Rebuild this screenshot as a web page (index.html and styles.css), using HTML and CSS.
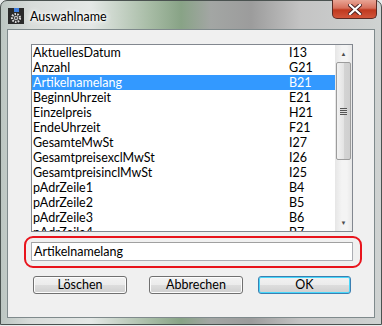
FILE: index.html
```html
<!DOCTYPE html>
<html lang="de">
<head>
    <meta charset="UTF-8">
    <title>Auswahlname</title>
    <link rel="stylesheet" href="styles.css">
</head>
<body>
    <div class="window">
        <div class="titlebar">
            <svg class="app-icon" width="16" height="16" viewBox="0 0 16 16">
                <rect x="0" y="0" width="16" height="16" fill="#2a2a2a"/>
                <rect x="6" y="0" width="5" height="4" fill="#3d7fe0"/>
                <circle cx="8" cy="10" r="4" fill="none" stroke="#d8d8d8" stroke-width="2.2" stroke-dasharray="1.6 1.2"/>
                <circle cx="8" cy="10" r="2.2" fill="#bdbdbd"/>
                <circle cx="8" cy="10" r="0.9" fill="#2a2a2a"/>
            </svg>
            <span class="title">Auswahlname</span>
            <div class="close-btn">
                <svg width="14" height="11" viewBox="0 0 14 11">
                    <path d="M2 1 L12 10 M12 1 L2 10" stroke="#4a2020" stroke-width="4" stroke-linecap="square"/>
                    <path d="M2 1 L12 10 M12 1 L2 10" stroke="#ffffff" stroke-width="2.2" stroke-linecap="square"/>
                </svg>
            </div>
        </div>

        <div class="client">
            <div class="listbox">
                <div class="rows">
                    <div class="row"><span>AktuellesDatum</span><span>I13</span></div>
                    <div class="row"><span>Anzahl</span><span>G21</span></div>
                    <div class="row selected"><span>Artikelnamelang</span><span>B21</span></div>
                    <div class="row"><span>BeginnUhrzeit</span><span>E21</span></div>
                    <div class="row"><span>Einzelpreis</span><span>H21</span></div>
                    <div class="row"><span>EndeUhrzeit</span><span>F21</span></div>
                    <div class="row"><span>GesamteMwSt</span><span>I27</span></div>
                    <div class="row"><span>GesamtpreisexclMwSt</span><span>I26</span></div>
                    <div class="row"><span>GesamtpreisinclMwSt</span><span>I25</span></div>
                    <div class="row"><span>pAdrZeile1</span><span>B4</span></div>
                    <div class="row"><span>pAdrZeile2</span><span>B5</span></div>
                    <div class="row"><span>pAdrZeile3</span><span>B6</span></div>
                    <div class="row"><span>pAdrZeile4</span><span>B7</span></div>
                </div>
                <div class="scrollbar">
                    <div class="arrow">&#9650;</div>
                    <div class="track">
                        <div class="thumb"><span class="grip"></span></div>
                    </div>
                    <div class="arrow">&#9660;</div>
                </div>
            </div>

            <div class="highlight">
                <div class="textfield">Artikelnamelang</div>
            </div>

            <div class="buttons">
                <div class="btn">Löschen</div>
                <div class="btn">Abbrechen</div>
                <div class="btn default">OK</div>
            </div>
        </div>
    </div>
</body>
</html>
```

FILE: styles.css
```css
body {
    margin: 0;
    background: #e8ecec;
    font-family: Lato, "Noto Sans", sans-serif;
    font-size: 12.5px;
    color: #000;
}
.window {
    width: 382px;
    height: 325px;
    box-sizing: border-box;
    border: 1px solid #4a5250;
    border-radius: 7px 7px 0 0;
    background: linear-gradient(90deg, #bcc6c2 0px, #d8dcda 30px, #e4e8e6 90px, #a6bba4 150px, #88a386 180px, #a3a6a4 210px, #9c9c9c 250px, #c4c4c4 300px, #cfd3d2 382px);
    padding: 0 6px 6px 6px;
    display: flex;
    flex-direction: column;
}
.titlebar {
    height: 28px;
    display: flex;
    align-items: center;
    position: relative;
}
.app-icon {
    margin-left: 1px;
    margin-top: 2px;
}
.title {
    margin-left: 6px;
    margin-top: 2px;
    color: #000;
    text-shadow: 0 0 6px #fff, 0 0 6px #fff, 0 0 3px #fff;
}
.close-btn {
    position: absolute;
    right: -2px;
    top: -1px;
    width: 45px;
    height: 19px;
    border: 1px solid #5a2a24;
    border-top: none;
    border-radius: 0 0 5px 5px;
    background: linear-gradient(#e9a595 0%, #d7705c 45%, #c0391f 55%, #d1553a 100%);
    display: flex;
    align-items: center;
    justify-content: center;
    box-sizing: border-box;
}
.client {
    flex: 1;
    background: #f0f0f0;
    border: 1px solid #7f8a8c;
    padding: 14px 0 0 16px;
}
.listbox {
    margin-left: 7px;
    width: 322px;
    height: 188px;
    box-sizing: border-box;
    border: 1px solid #82878f;
    background: #fff;
    display: flex;
    overflow: hidden;
}
.rows {
    width: 303px;
    overflow: hidden;
}
.row {
    display: grid;
    grid-template-columns: 256px 1fr;
    height: 15px;
    line-height: 15px;
    padding-left: 1px;
    white-space: nowrap;
}
.row.selected {
    background: #3399ff;
    color: #fff;
}
.scrollbar {
    width: 17px;
    background: linear-gradient(90deg, #e6e6e6, #f4f4f4 40%, #f4f4f4 70%, #e8e8e8);
    display: flex;
    flex-direction: column;
}
.arrow {
    height: 17px;
    font-size: 6px;
    color: #4d4d4d;
    display: flex;
    align-items: center;
    justify-content: center;
}
.track {
    flex: 1;
}
.thumb {
    margin: 0 1px;
    height: 98px;
    box-sizing: border-box;
    border: 1px solid #9c9c9c;
    border-radius: 2px;
    background: linear-gradient(90deg, #f2f2f2, #e4e4e4 50%, #d4d4d4 51%, #cfcfcf);
    display: flex;
    align-items: center;
    justify-content: center;
}
.grip {
    width: 7px;
    height: 7px;
    background: repeating-linear-gradient(#555 0, #555 1px, #ddd 1px, #ddd 2px);
}
.highlight {
    margin-top: 4px;
    width: 338px;
    height: 32px;
    box-sizing: border-box;
    border: 2px solid #e8141c;
    border-radius: 9px;
    padding: 4px 0 0 5px;
}
.textfield {
    width: 322px;
    height: 19px;
    box-sizing: border-box;
    border: 1px solid #abadb3;
    border-top-color: #a0a0a0;
    background: #fff;
    line-height: 17px;
    padding-left: 2px;
}
.buttons {
    display: flex;
    margin: 8px 0 0 9px;
}
.btn {
    width: 94px;
    height: 18px;
    box-sizing: border-box;
    border: 1px solid #707070;
    border-radius: 3px;
    background: linear-gradient(#f2f2f2 0%, #ebebeb 50%, #dddddd 51%, #cfcfcf 100%);
    box-shadow: inset 0 0 0 1px #fcfcfc;
    text-align: center;
    line-height: 16px;
    margin-right: 22px;
}
.btn:nth-child(2) {
    margin-right: 15px;
}
.btn.default {
    width: 93px;
    border-color: #3c7fb1;
    box-shadow: inset 0 0 0 1px #48d8fb;
}
```
